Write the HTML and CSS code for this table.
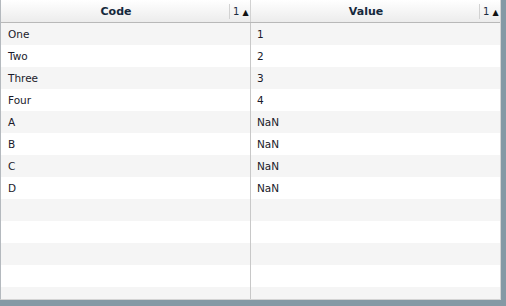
FILE: index.html
```html
<!DOCTYPE html>
<html>
<head>
<meta charset="utf-8">
<link rel="stylesheet" href="styles.css">
</head>
<body>
<div class="grid">
  <div class="head">
    <div class="hcell"><span class="label">Code</span><span class="sort">1 <span class="tri">▲</span></span></div>
    <div class="hcell last"><span class="label">Value</span><span class="sort">1 <span class="tri">▲</span></span></div>
  </div>
  <div class="row"><div class="cell">One</div><div class="cell last">1</div></div>
  <div class="row"><div class="cell">Two</div><div class="cell last">2</div></div>
  <div class="row"><div class="cell">Three</div><div class="cell last">3</div></div>
  <div class="row"><div class="cell">Four</div><div class="cell last">4</div></div>
  <div class="row"><div class="cell">A</div><div class="cell last">NaN</div></div>
  <div class="row"><div class="cell">B</div><div class="cell last">NaN</div></div>
  <div class="row"><div class="cell">C</div><div class="cell last">NaN</div></div>
  <div class="row"><div class="cell">D</div><div class="cell last">NaN</div></div>
  <div class="row"><div class="cell"></div><div class="cell last"></div></div>
  <div class="row"><div class="cell"></div><div class="cell last"></div></div>
  <div class="row"><div class="cell"></div><div class="cell last"></div></div>
  <div class="row"><div class="cell"></div><div class="cell last"></div></div>
  <div class="row"><div class="cell"></div><div class="cell last"></div></div>
</div>
</body>
</html>
```
FILE: styles.css
```css
html, body {
  margin: 0;
  padding: 0;
}
body {
  background: #8499a5;
  width: 506px;
  height: 306px;
  overflow: hidden;
  font-family: "DejaVu Sans", Verdana, sans-serif;
  font-size: 11px;
}
.grid {
  width: 501px;
  height: 300px;
  box-sizing: border-box;
  background: #fff;
  border-left: 1px solid #b4b9be;
  border-right: 1px solid #d4d4d4;
  border-bottom: 1px solid #d4d4d4;
  overflow: hidden;
}
.head {
  display: grid;
  grid-template-columns: 250px 249px;
  height: 22px;
  border-bottom: 1px solid #b8b8b8;
  background: linear-gradient(#ffffff, #ececec);
}
.hcell {
  display: flex;
  align-items: center;
  border-right: 1px solid #d2d2d2;
  color: #15283c;
}
.hcell.last {
  border-right: none;
}
.label {
  flex: 1;
  text-align: center;
  font-weight: bold;
  padding-left: 2px;
}
.sort {
  width: 19px;
  height: 15px;
  line-height: 15px;
  border-left: 1px solid #d2d2d2;
  padding-left: 3px;
  box-sizing: border-box;
  width: 21px;
  font-size: 10px;
  color: #1b2a3e;
  white-space: nowrap;
}
.tri {
  font-size: 8px;
  color: #111;
}
.row {
  display: grid;
  grid-template-columns: 250px 249px;
  height: 22px;
}
.row:nth-child(even) {
  background: #f5f5f5;
}
.cell {
  border-right: 1px solid #c8c8c8;
  padding-left: 7px;
  line-height: 22px;
  color: #1a1a2a;
  font-size: 10.5px;
}
.cell.last {
  border-right: none;
  padding-left: 6px;
}
```
